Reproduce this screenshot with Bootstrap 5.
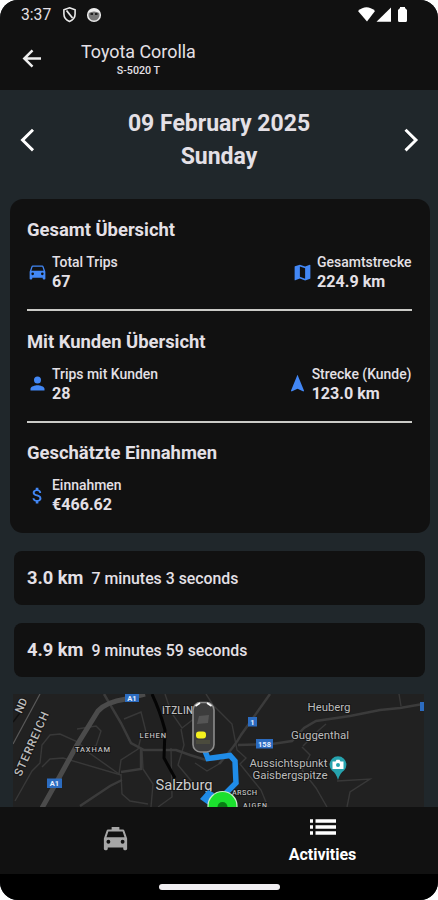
<!DOCTYPE html>
<html lang="de">
<head>
<meta charset="utf-8">
<meta name="viewport" content="width=device-width, initial-scale=1">
<title>Toyota Corolla – Activities</title>
<link href="https://cdn.jsdelivr.net/npm/bootstrap@5.3.0/dist/css/bootstrap.min.css" rel="stylesheet">
<style>
  body { background: #fff; font-family: Roboto, "Liberation Sans", sans-serif; color: #e4e0e6; }
  .phone { height: 900px; background: #20272b; border-radius: 18px; }
  .surface { background: #111; }
  svg { display: block; flex: none; }
  .statusbar { height: 28px; padding: 1px 28px 0 21px; font-size: 15.7px; line-height: 28px; }
  .alerts { margin-left: 12px; }
  .appbar { height: 62px; padding: 0 0 0 22px; }
  .app-name { margin: 13px 0 0 39px; }
  .app-title { font-size: 17.9px; line-height: 22px; }
  .app-plate { font-size: 10.7px; line-height: 15px; font-weight: 500; }
  .day { height: 109px; padding: 0 19px; }
  .day-text { font-size: 23px; line-height: 32.5px; font-weight: 700; padding-top: 18px; }
  .day-step { margin-top: 38px; }
  .overview { height: 334px; margin: 0 8.5px 0 9.5px; padding: 20px 18px 0 17.5px; border-radius: 13px; }
  .section-title { font-size: 18.4px; line-height: 22px; font-weight: 700; margin: 0; }
  .stat-row { margin-top: 11px; height: 40px; }
  .stat-icon { fill: #4287f5; margin-right: 4px; }
  .stat-label { font-size: 13.95px; line-height: 20px; font-weight: 500; }
  .stat-value { font-size: 16.1px; line-height: 20px; font-weight: 700; }
  .rule { height: 2px; background: #cbcbc7; margin: 17px 0 19.5px; }
  .trip { height: 54px; margin: 18px 13px 0 14px; padding: 13px 13px 0; border-radius: 8px; line-height: 28px; }
  .trip-km { font-size: 18.3px; font-weight: 700; margin-right: 8px; }
  .trip-time { font-size: 15.85px; font-weight: 500; }
  .route-map { margin: 17px 14px 0 13px; }
  .tabs { height: 67px; padding: 0 12px; }
  .taxi-tab { margin-top: 16px; }
  .tab-name { font-size: 16px; line-height: 18px; font-weight: 700; color: #fff; }
  .gesture { height: 26px; background: #000; }
  .pill { width: 121px; height: 6px; background: #f1eff2; }
</style>
<script src="https://cdn.jsdelivr.net/npm/bootstrap@5.3.0/dist/js/bootstrap.bundle.min.js"></script>
</head>
<body>
<div class="phone overflow-hidden d-flex flex-column">

  <div class="statusbar surface d-flex align-items-center">
    <span>3:37</span>
    <svg class="alerts" width="40" height="28" viewBox="0 0 40 28">
      <path d="M6 6.800 11.600 8.800V13q0 5-5.600 7.400Q.4 18 .4 13V8.800Z" transform="translate(.5 0)" fill="none" stroke="#e8e8e8" stroke-width="1.600"/>
      <path d="M3.500 9.500 9.500 17" stroke="#e8e8e8" stroke-width="1.800"/>
      <circle cx="31" cy="14" r="6.300" fill="#777" stroke="#e8e8e8" stroke-width="1.600"/>
      <path d="M25.500 12Q31 9 36.500 12Q36 8 31 7.500Q26 8 25.500 12Z" fill="#eee"/>
      <path d="M27.500 12h2.500v2h-2.500zM32 12h2.500v2H32z" fill="#222"/>
    </svg>
    <svg class="ms-auto" width="52" height="28" viewBox="0 0 52 28" fill="#fff"><path d="M0 10Q8.500 2.500 17 10L9 20.500Z"/><path d="M33 6.500V20.700H18.500Z"/><path d="M42 7V6h5v1l2 2v10.500q0 1.500-1.500 1.500h-6q-1.500 0-1.500-1.500V9Z"/></svg>
  </div>

  <header class="appbar surface d-flex align-items-start">
    <svg width="20" height="61" viewBox="0 0 20 61" fill="none" stroke="#eee" stroke-width="2.500"><path d="M19 30.500H2.500M10.500 22.300 2.300 30.500l8.200 8.200"/></svg>
    <div class="app-name text-center">
      <div class="app-title">Toyota Corolla</div>
      <div class="app-plate">S-5020 T</div>
    </div>
  </header>

  <div class="day d-flex justify-content-between align-items-start">
    <svg class="day-step" width="16" height="24" viewBox="0 0 16 24" fill="none" stroke="#fff" stroke-width="2.900"><path d="M14 1.800 3.500 12.100 14 22.400"/></svg>
    <div class="day-text text-center">09 February 2025<br>Sunday</div>
    <svg class="day-step" width="16" height="24" viewBox="0 0 16 24" fill="none" stroke="#fff" stroke-width="2.900"><path d="M2.500 1.800 13 12.100 2.500 22.400"/></svg>
  </div>

  <section class="overview surface">
    <h2 class="section-title">Gesamt Übersicht</h2>
    <div class="stat-row d-flex justify-content-between">
      <div class="d-flex align-items-center">
        <svg class="stat-icon" width="21" height="21" viewBox="0 0 24 24"><path d="M18.920 5.010C18.720 4.420 18.160 4 17.500 4h-11c-.66 0-1.210.42-1.420 1.010L3 11v8c0 .55.45 1 1 1h1c.55 0 1-.45 1-1v-1h12v1c0 .55.45 1 1 1h1c.55 0 1-.45 1-1v-8zM6.500 15a1.500 1.500 0 1 1 0-3 1.500 1.500 0 0 1 0 3m11 0a1.500 1.500 0 1 1 0-3 1.500 1.500 0 0 1 0 3M5 10l1.500-4.500h11L19 10z"/></svg>
        <div><div class="stat-label">Total Trips</div><div class="stat-value">67</div></div>
      </div>
      <div class="d-flex align-items-center">
        <svg class="stat-icon" width="21" height="21" viewBox="0 0 24 24"><path d="m20.500 3-.16.030L15 5.100 9 3 3.360 4.900c-.21.070-.36.250-.36.480V20.500c0 .28.220.5.500.5l.16-.03L9 18.900l6 2.100 5.640-1.900c.21-.07.36-.25.36-.48V3.500c0-.28-.22-.5-.5-.5M15 19l-6-2.110V5l6 2.110z"/></svg>
        <div><div class="stat-label">Gesamtstrecke</div><div class="stat-value">224.9 km</div></div>
      </div>
    </div>
    <div class="rule"></div>
    <h2 class="section-title">Mit Kunden Übersicht</h2>
    <div class="stat-row d-flex justify-content-between">
      <div class="d-flex align-items-center">
        <svg class="stat-icon" width="21" height="21" viewBox="0 0 24 24"><path d="M12 12a4 4 0 1 0 0-8 4 4 0 0 0 0 8m0 2c-2.670 0-8 1.340-8 4v2h16v-2c0-2.660-5.330-4-8-4"/></svg>
        <div><div class="stat-label">Trips mit Kunden</div><div class="stat-value">28</div></div>
      </div>
      <div class="d-flex align-items-center">
        <svg class="stat-icon" width="21" height="21" viewBox="0 0 24 24"><path d="M12 2 4.500 20.290l.71.710L12 18l6.790 3 .71-.71z"/></svg>
        <div><div class="stat-label">Strecke (Kunde)</div><div class="stat-value">123.0 km</div></div>
      </div>
    </div>
    <div class="rule"></div>
    <h2 class="section-title">Geschätzte Einnahmen</h2>
    <div class="stat-row d-flex">
      <div class="d-flex align-items-center">
        <svg class="stat-icon" width="21" height="21" viewBox="0 0 24 24"><path d="M11.800 10.900c-2.270-.59-3-1.200-3-2.150 0-1.090 1.010-1.850 2.700-1.850 1.780 0 2.440.85 2.500 2.100h2.210c-.07-1.720-1.120-3.300-3.210-3.810V3h-3v2.160c-1.940.42-3.500 1.680-3.500 3.610 0 2.310 1.910 3.460 4.700 4.130 2.500.6 3 1.480 3 2.410 0 .69-.49 1.790-2.700 1.790-2.060 0-2.870-.92-2.980-2.100h-2.200c.12 2.190 1.760 3.420 3.680 3.830V21h3v-2.150c1.950-.37 3.500-1.500 3.500-3.550 0-2.840-2.430-3.810-4.700-4.400"/></svg>
        <div><div class="stat-label">Einnahmen</div><div class="stat-value">€466.62</div></div>
      </div>
    </div>
  </section>

  <div class="trip surface"><span class="trip-km">3.0 km</span><span class="trip-time">7 minutes 3 seconds</span></div>
  <div class="trip surface"><span class="trip-km">4.9 km</span><span class="trip-time">9 minutes 59 seconds</span></div>

  <div class="route-map">
    <svg width="411" height="113" viewBox="13 694 411 113" fill="none" font-family="Roboto, sans-serif">
      <path d="M13 694H424V807H13Z" fill="#212121"/>
      <!-- minor roads -->
      <g stroke="#383838" stroke-width="1.400">
        <path d="M15 801 32 771 40 763 42 745 50 735 60 734 78 742 88 752 119 774 121 760 138 749 142 733"/>
        <path d="M77 729 96 726 101 731 96 746 80 751M124 719 141 712 146 732M42 767 50 759 63 758 121 775"/>
        <path d="M121 774 122 794 130 801 148 804M142 750 143 769 153 784 151 807M165 694 171 712 182 728 195 718M181 729 184 745 178 765 193 783"/>
        <path d="M195 763 207 771 219 764M206 694 213 705 232 724 237 750 246 758 240 764 261 790 268 807M302 747 310 755 302 770 316 788 327 807M347 807 350 792 370 779 337 781M303 746 319 730 326 724M399 694 401 706M158 807 172 797 171 748"/>
      </g>
      <g stroke="#3b3b3b" stroke-width="2.500">
        <path d="M104 694 121 723 131 743 144 750 176 750 190 755 206 760 219 759M141 749 141 769 121 772M80 806 110 786 122 780M219 764Q235 746 241 735L270 694"/>
        <path d="M238 745 272 744 292 741 304 728 316 721 350 716 380 710 400 708 423 704"/>
      </g>
      <path d="M42 808 60 776 77 745 98 711 Q106 702 126 699L145 694" stroke="#4b4b4b" stroke-width="5"/>
      <path d="M152 694Q160 711 165 730L164 758 175 778" stroke="#050505" stroke-width="3"/>
      <path d="M40 694 13 744" stroke="#595959" stroke-width="1.200"/>
      <path d="M26 705 13 722" stroke="#111" stroke-width="1.500"/>
      <!-- road shields -->
      <g fill="#2c6cc0"><path d="M125 694h14v8h-14zM47 778.500h15v9.500H47zM248 717h9v9.500h-9zM256 739h17v9.500h-17zM420 702h4v9h-4z"/></g>
      <g fill="#e8f0ff" font-size="7.500" font-weight="700" text-anchor="middle"><text x="132" y="700.500">A1</text><text x="54.500" y="786">A1</text><text x="252.500" y="724.500">1</text><text x="264.500" y="746.500">158</text></g>
      <!-- place names -->
      <g fill="#bcbcbc" stroke="#161616" stroke-width="2" paint-order="stroke" font-weight="500">
        <text x="162" y="713.500" font-size="10" textLength="38">ITZLING</text>
        <text x="139.500" y="738" font-size="7.500" textLength="26.500">LEHEN</text>
        <text x="75" y="751.500" font-size="7.500" textLength="35">TAXHAM</text>
        <text x="232" y="794.500" font-size="7.500" textLength="25">ARSCH</text>
        <text x="243" y="808" font-size="7" textLength="24">AIGEN</text>
        <text x="155.500" y="790" font-size="14" fill="#cecece" font-weight="400" textLength="57" lengthAdjust="spacingAndGlyphs">Salzburg</text>
        <text x="307.500" y="711" font-size="11.500" font-weight="400" textLength="43">Heuberg</text>
        <text x="291" y="738.500" font-size="11.500" font-weight="400" textLength="58">Guggenthal</text>
        <text x="249.500" y="766.500" font-size="11.500" font-weight="400" textLength="78">Aussichtspunkt</text>
        <text x="252.500" y="778.500" font-size="11.500" font-weight="400" textLength="75">Gaisbergspitze</text>
        <text transform="translate(21 777) rotate(-66)" font-size="11.500" textLength="69">STERREICH</text>
        <text transform="translate(21.500 714) rotate(-66)" font-size="11">ND</text>
      </g>
      <!-- route -->
      <path d="M205 751 208 758.500 230 755.500 235 761 236 783 226 793" stroke="#1f8ce8" stroke-width="5.500"/>
      <path d="M208 790 214 793 211 806 207 804 200 799Z" fill="#1f8ce8"/>
      <circle cx="222.500" cy="806" r="14.500" fill="#1be02e" stroke="#c9efca" stroke-width="1.200"/>
      <circle cx="222.500" cy="807" r="5" fill="#087d14"/>
      <!-- vehicle marker -->
      <rect x="193" y="702.500" width="21" height="49.500" rx="7.500" fill="#3c3c3c" stroke="#8d8d8d" stroke-width="1.600"/>
      <path d="M195.500 706 200 703M207 703l4.500 3" stroke="#fff" stroke-width="1.600"/>
      <path d="m199 716 10-1-1 8-11 1z" fill="#555"/>
      <path d="M196 740h14v4h-14z" fill="#4b4b3d"/>
      <rect x="196" y="731.500" width="10" height="7" rx="3" fill="#f4f01e"/>
      <!-- viewpoint pin -->
      <path d="M338 780Q336 773 332 770.500A8.400 8.400 0 1 1 344 770.500Q340 773 338 780Z" fill="#26a3ae"/>
      <path d="M332.500 761.500h3l1-1.700h3l1 1.700h3v7.500h-11z" fill="#fff"/><circle cx="338" cy="765" r="2" fill="#26a3ae"/>
    </svg>
  </div>

  <nav class="tabs surface d-flex">
    <div class="w-50 d-flex flex-column align-items-center">
      <svg class="taxi-tab" width="31" height="31" viewBox="0 0 24 24" fill="#a6a6a6"><path d="M18.920 6.010C18.720 5.420 18.160 5 17.500 5H15V3H9v2H6.500c-.66 0-1.210.42-1.420 1.010L3 12v8c0 .55.450 1 1 1h1c.55 0 1-.45 1-1v-1h12v1c0 .55.450 1 1 1h1c.55 0 1-.45 1-1v-8zM6.500 16a1.500 1.500 0 1 1 0-3 1.500 1.500 0 0 1 0 3m11 0a1.500 1.500 0 1 1 0-3 1.500 1.500 0 0 1 0 3M5 11l1.500-4.500h11L19 11z"/></svg>
    </div>
    <div class="w-50 d-flex flex-column align-items-center">
      <svg width="26" height="39" viewBox="0 0 26 39" fill="#fff"><path d="M0 12.300h3v3.400H0zm5.500 0H26v3.400H5.500zM0 18.300h3v3.400H0zm5.500 0H26v3.400H5.500zM0 24.300h3v3.400H0zm5.500 0H26v3.400H5.500z"/></svg>
      <div class="tab-name">Activities</div>
    </div>
  </nav>
  <div class="gesture d-flex justify-content-center align-items-center"><div class="pill rounded-pill"></div></div>
</div>
</body>
</html>
